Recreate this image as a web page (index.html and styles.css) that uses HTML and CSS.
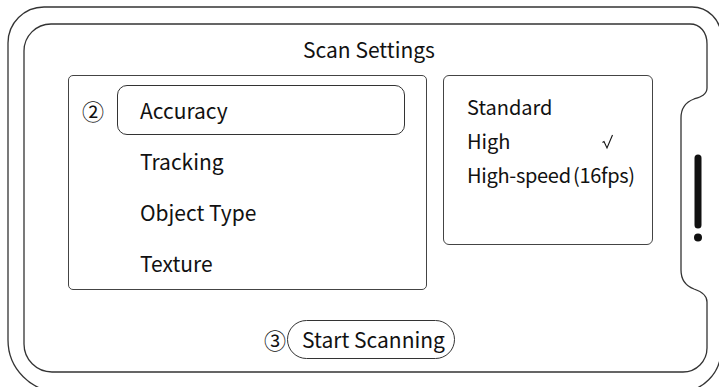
FILE: index.html
```html
<!DOCTYPE html>
<html lang="en">
<head>
    <meta charset="UTF-8">
    <meta name="viewport" content="width=device-width, initial-scale=1.0">
    <title>Scan Settings</title>
    <link rel="stylesheet" href="styles.css">
</head>
<body>

    <div class="device">
        <!-- phone outline, drawn behind the screen content -->
        <svg class="outline" width="719" height="387" viewBox="0 0 719 387">
            <path d="M 8 43 A 36 36 0 0 1 44 7 L 692 7 A 29 29 0 0 1 721 36 L 721 350 A 42 42 0 0 1 679 392 L 60 392 A 52 52 0 0 1 8 340 Z"
                  fill="none" stroke="#333" stroke-width="1.3"/>
            <path d="M 24 51 A 27 27 0 0 1 51 24 L 690 24 C 700 24 707 32 707 44 L 707 88 C 707 95 700 97 694 99 C 686 102 681 108 681 118 L 681 270 C 681 280 686 286 694 289 C 700 291 707 294 707 302 L 707 348 A 24 24 0 0 1 683 372 L 52 372 A 28 28 0 0 1 24 344 Z"
                  fill="none" stroke="#333" stroke-width="1.3"/>
            <line x1="698" y1="158" x2="698" y2="225" stroke="#111" stroke-width="7" stroke-linecap="round"/>
            <circle cx="698" cy="237.5" r="4" fill="#111"/>
        </svg>

        <div class="screen">
            <h1 class="title">Scan Settings</h1>

            <div class="panels">
                <div class="menu">
                    <div class="menu-row">
                        <span class="step">②</span>
                        <div class="menu-item selected">Accuracy</div>
                    </div>
                    <div class="menu-row">
                        <span class="step"></span>
                        <div class="menu-item">Tracking</div>
                    </div>
                    <div class="menu-row">
                        <span class="step"></span>
                        <div class="menu-item">Object Type</div>
                    </div>
                    <div class="menu-row">
                        <span class="step"></span>
                        <div class="menu-item">Texture</div>
                    </div>
                </div>

                <div class="options">
                    <div class="option"><span class="option-label">Standard</span></div>
                    <div class="option">
                        <span class="option-label">High</span>
                        <svg class="check" width="12" height="16" viewBox="0 0 12 16">
                            <path d="M 0.5 8.5 L 2 7.5 L 5 14 L 10.5 1" fill="none" stroke="#111" stroke-width="1.1"/>
                        </svg>
                    </div>
                    <div class="option tight"><span class="option-label">High-speed (16fps)</span></div>
                </div>
            </div>

            <div class="start-row">
                <span class="step-small">③</span>
                <button class="start-button">Start Scanning</button>
            </div>
        </div>
    </div>

</body>
</html>
```

FILE: styles.css
```css
body {
    margin: 0;
    background: #fff;
    font-family: "Noto Sans CJK JP", "Noto Sans", sans-serif;
    color: #111;
}

.device {
    position: relative;
    width: 719px;
    height: 387px;
    overflow: hidden;
}

.outline {
    position: absolute;
    left: 0;
    top: 0;
}

.screen {
    position: relative;
    padding-top: 37px;
}

.title {
    margin: 0;
    padding-left: 19px;
    font-size: 21px;
    font-weight: normal;
    line-height: 24px;
    text-align: center;
}

.panels {
    display: flex;
    align-items: flex-start;
    gap: 16px;
    margin-top: 14px;
    padding-left: 68px;
}

.menu {
    box-sizing: border-box;
    width: 359px;
    height: 215px;
    padding: 9px 0 0 13px;
    border: 1px solid #444;
    border-radius: 5px;
    display: flex;
    flex-direction: column;
    gap: 1px;
}

.menu-row {
    display: flex;
    align-items: center;
}

.step {
    width: 35px;
    font-size: 22px;
    line-height: 50px;
}

.menu-item {
    box-sizing: border-box;
    width: 288px;
    height: 50px;
    padding-left: 22px;
    border: 1px solid transparent;
    border-radius: 10px;
    font-size: 21px;
    line-height: 48px;
}

.menu-item.selected {
    border-color: #333;
}

.options {
    box-sizing: border-box;
    width: 210px;
    height: 170px;
    padding: 14px 0 0 23px;
    border: 1px solid #444;
    border-radius: 6px;
}

.option {
    display: flex;
    align-items: center;
    font-size: 20px;
    line-height: 34px;
}

.option.tight {
    word-spacing: -2px;
    letter-spacing: -0.3px;
}

.option-label {
    white-space: nowrap;
}

.check {
    margin-left: 92px;
    margin-top: 1px;
}

.start-row {
    display: flex;
    justify-content: center;
    align-items: center;
    gap: 1px;
    margin-top: 30px;
}

.step-small {
    font-size: 22px;
    line-height: 39px;
}

.start-button {
    box-sizing: border-box;
    height: 39px;
    padding: 0 9px 0 14px;
    border: 1px solid #333;
    border-radius: 20px;
    background: #fff;
    color: #111;
    font-family: inherit;
    font-size: 21px;
    line-height: 37px;
}
```
